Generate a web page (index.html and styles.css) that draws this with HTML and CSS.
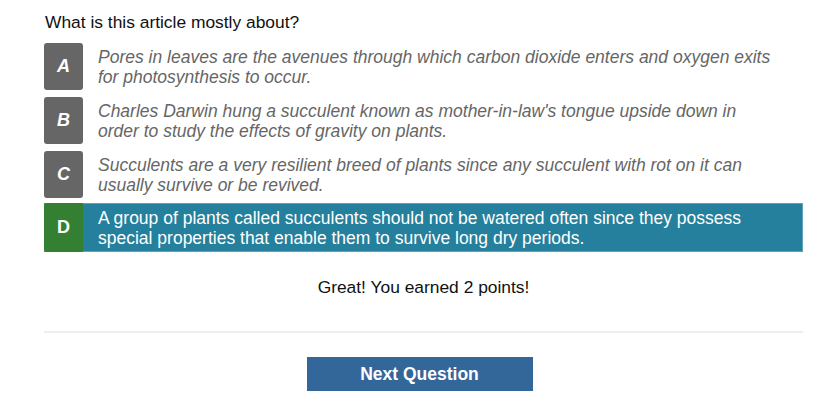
FILE: index.html
```html
<!DOCTYPE html>
<html>
<head>
<meta charset="utf-8">
<link rel="stylesheet" href="styles.css">
</head>
<body>
<div class="quiz">
  <div class="question">What is this article mostly about?</div>
  <div class="options">
    <div class="option">
      <div class="letter">A</div>
      <div class="text">Pores in leaves are the avenues through which carbon dioxide enters and oxygen exits for photosynthesis to occur.</div>
    </div>
    <div class="option">
      <div class="letter">B</div>
      <div class="text">Charles Darwin hung a succulent known as mother-in-law's tongue upside down in order to study the effects of gravity on plants.</div>
    </div>
    <div class="option">
      <div class="letter">C</div>
      <div class="text">Succulents are a very resilient breed of plants since any succulent with rot on it can usually survive or be revived.</div>
    </div>
    <div class="option correct">
      <div class="letter">D</div>
      <div class="text">A group of plants called succulents should not be watered often since they possess special properties that enable them to survive long dry periods.</div>
    </div>
  </div>
  <div class="feedback">Great! You earned 2 points!</div>
  <hr class="divider">
  <div class="actions">
    <button class="next">Next Question</button>
  </div>
</div>
</body>
</html>
```
FILE: styles.css
```css
html, body {
  margin: 0;
  padding: 0;
  background: #fff;
}
body {
  font-family: "Liberation Sans", Arial, sans-serif;
  color: #111;
}
.quiz {
  width: 759px;
  padding: 12px 0 0 44px;
}
.question {
  font-size: 17.4px;
  line-height: 21px;
  padding-left: 1px;
  margin-bottom: 10px;
}
.options {
  display: flex;
  flex-direction: column;
  gap: 7px;
}
.option {
  display: flex;
  align-items: center;
  min-height: 47px;
}
.letter {
  flex: 0 0 39px;
  align-self: stretch;
  display: flex;
  align-items: center;
  justify-content: center;
  background: #666;
  color: #fff;
  font-weight: bold;
  font-style: italic;
  font-size: 18px;
  border-radius: 3px;
}
.text {
  padding: 0 28px 0 15px;
  font-size: 17.5px;
  line-height: 20px;
  font-style: italic;
  color: #666;
}
.option.correct {
  background: #24809c;
  box-shadow: inset 0 0 0 1px #5ea3b9;
  min-height: 49px;
  margin-top: -2px;
}
.option.correct .letter {
  background: #338033;
  font-style: normal;
  border-radius: 2px 0 0 2px;
}
.option.correct .text {
  color: #fff;
  font-style: normal;
}
.feedback {
  text-align: center;
  font-size: 17.4px;
  line-height: 21px;
  margin-top: 25px;
  color: #111;
}
.divider {
  border: 0;
  border-top: 2px solid #eee;
  margin: 33px 0 0 0;
}
.actions {
  display: flex;
  justify-content: center;
  padding: 24px 8px 0 0;
}
.next {
  width: 226px;
  height: 34px;
  border: 0;
  background: #336699;
  color: #fff;
  font-family: "Liberation Sans", Arial, sans-serif;
  font-weight: bold;
  font-size: 17.5px;
  cursor: pointer;
}
```
